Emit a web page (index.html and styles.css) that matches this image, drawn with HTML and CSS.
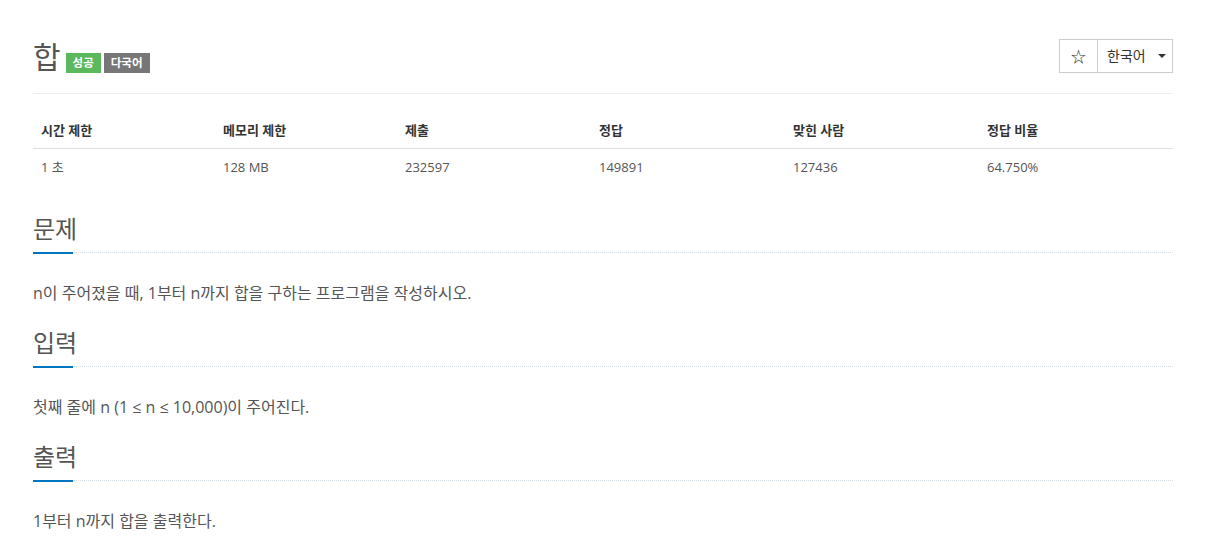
FILE: index.html
```html
<!DOCTYPE html>
<html lang="ko">
<head>
<meta charset="utf-8">
<title>합</title>
<link rel="stylesheet" href="styles.css">
</head>
<body>
<div class="container">
  <div class="page-header">
    <div class="title">
      <span class="problem-title">합</span>
      <span class="label label-success">성공</span>
      <span class="label label-default">다국어</span>
    </div>
    <div class="btn-group">
      <span class="btn btn-star">☆</span>
      <span class="btn btn-lang">한국어 <span class="caret"></span></span>
    </div>
  </div>

  <table class="info">
    <thead>
      <tr>
        <th class="c1">시간 제한</th>
        <th class="c1">메모리 제한</th>
        <th class="c2">제출</th>
        <th class="c2">정답</th>
        <th class="c2">맞힌 사람</th>
        <th class="c2">정답 비율</th>
      </tr>
    </thead>
    <tbody>
      <tr>
        <td>1 초</td>
        <td>128 MB</td>
        <td>232597</td>
        <td>149891</td>
        <td>127436</td>
        <td>64.750%</td>
      </tr>
    </tbody>
  </table>

  <section class="problem-section">
    <div class="headline"><h2>문제</h2></div>
    <div class="rule"><span class="bar"></span><span class="dots"></span></div>
    <p>n이 주어졌을 때, 1부터 n까지 합을 구하는 프로그램을 작성하시오.</p>
  </section>

  <section class="problem-section">
    <div class="headline"><h2>입력</h2></div>
    <div class="rule"><span class="bar"></span><span class="dots"></span></div>
    <p>첫째 줄에 n (1 ≤ n ≤ 10,000)이 주어진다.</p>
  </section>

  <section class="problem-section">
    <div class="headline"><h2>출력</h2></div>
    <div class="rule"><span class="bar"></span><span class="dots"></span></div>
    <p>1부터 n까지 합을 출력한다.</p>
  </section>
</div>
</body>
</html>
```

FILE: styles.css
```css
* { box-sizing: border-box; }

body {
  margin: 0;
  background: #fff;
  font-family: "Open Sans", "Noto Sans CJK KR", sans-serif;
  font-size: 14px;
  line-height: 20px;
  color: #555;
}

.container {
  width: 1140px;
  margin-left: 33px;
}

.page-header {
  display: flex;
  justify-content: space-between;
  align-items: flex-start;
  padding-top: 39px;
  padding-bottom: 20px;
  border-bottom: 1px solid #eee;
}

.title {
  display: flex;
  align-items: flex-end;
  height: 34px;
}

.problem-title {
  font-size: 30px;
  line-height: 33px;
  color: #555;
  margin-right: 5px;
}

.label {
  display: inline-block;
  font-size: 11.5px;
  line-height: 14px;
  font-weight: 700;
  color: #fff;
  padding: 3px 7px;
  margin-right: 3px;
  margin-bottom: 0;
}

.label-success { background: #5cb85c; }
.label-default { background: #777; }

.btn-group {
  display: flex;
  height: 34px;
}

.btn {
  display: flex;
  align-items: center;
  border: 1px solid #ccc;
  color: #333;
  font-size: 14px;
  height: 34px;
}

.btn-star {
  width: 39px;
  justify-content: center;
  font-size: 15px;
}

.btn-lang {
  width: 76px;
  margin-left: -1px;
  padding-left: 9px;
}

.caret {
  display: inline-block;
  width: 0;
  height: 0;
  margin-left: 12px;
  border-top: 4px solid #333;
  border-left: 4px solid transparent;
  border-right: 4px solid transparent;
}

.info {
  width: 1140px;
  border-collapse: collapse;
  margin-top: 18px;
  font-size: 13px;
}

.info th, .info td {
  text-align: left;
  padding: 8px;
  line-height: 20px;
}

.info th {
  color: #333;
  font-weight: 700;
  border-bottom: 1px solid #ddd;
}

.info td { color: #555; }

.c1 { width: 182px; }
.c2 { width: 194px; }

.problem-section { margin-top: 31px; }
.problem-section + .problem-section { margin-top: 26px; }

.headline h2 {
  margin: 0;
  font-size: 24px;
  font-weight: 400;
  line-height: 26px;
  color: #555;
  padding-bottom: 10px;
}

.rule {
  display: flex;
  align-items: flex-start;
  height: 2px;
}

.bar {
  width: 40px;
  height: 2px;
  background: #0076c0;
}

.dots {
  flex: 1;
  border-top: 1px dotted #d5dde8;
}

.problem-section p {
  margin: 28px 0 0;
  font-size: 16px;
  line-height: 22px;
  color: #555;
}
```
